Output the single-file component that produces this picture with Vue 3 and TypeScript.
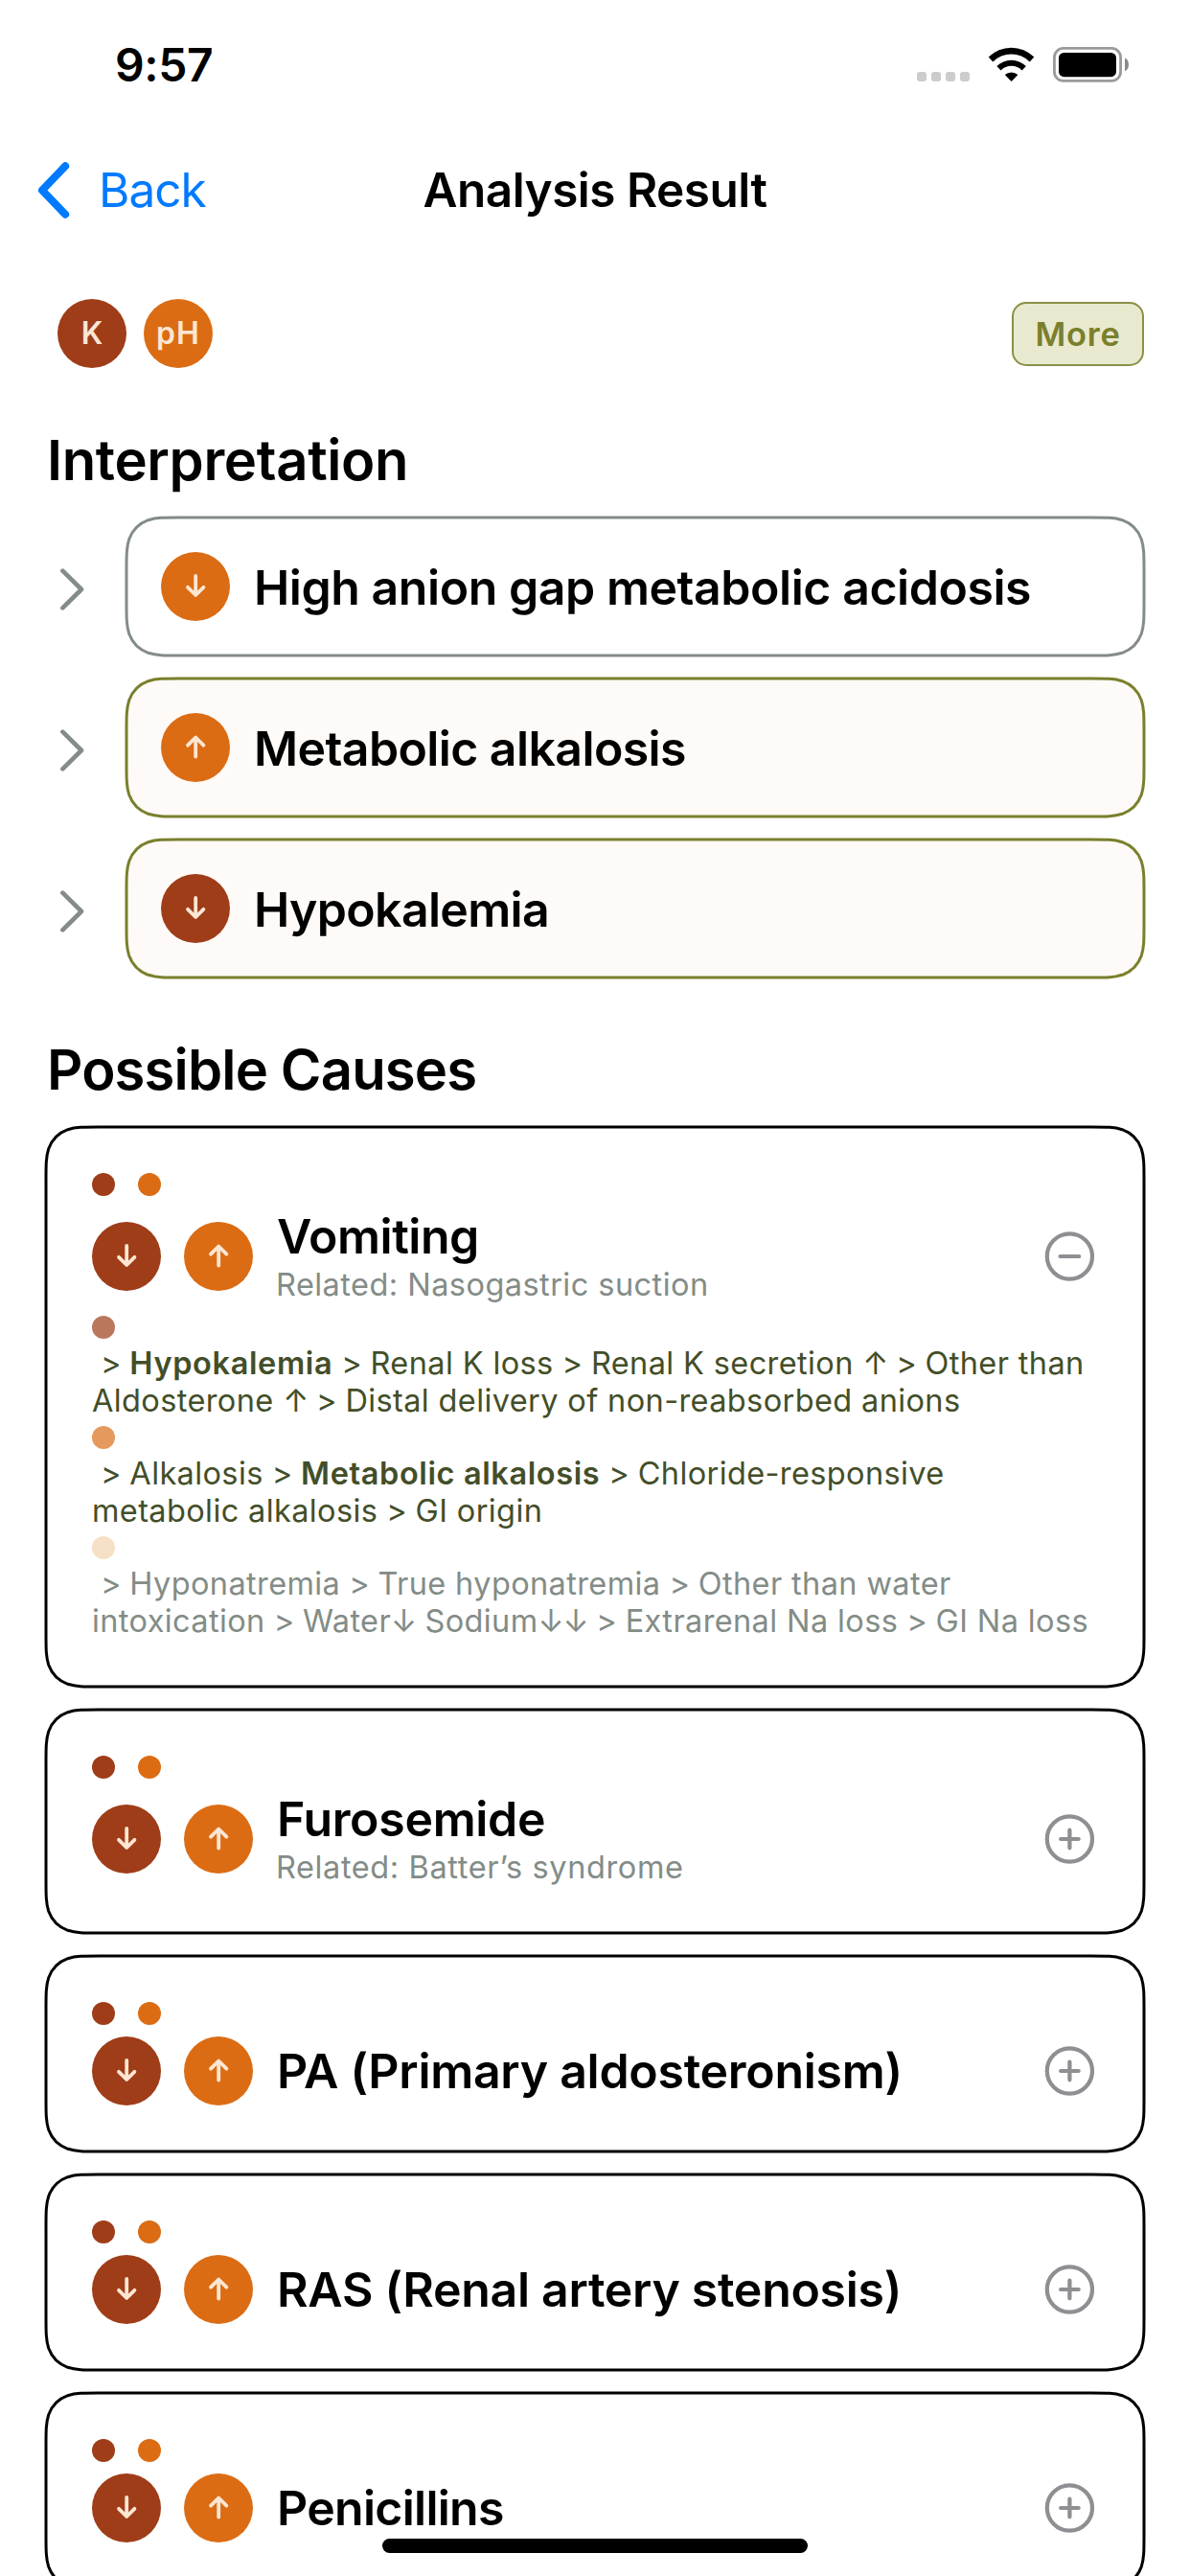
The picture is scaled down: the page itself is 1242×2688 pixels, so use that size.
<script setup lang="ts">
type Tone = 'rust' | 'orange' | 'cream'
type Direction = 'up' | 'down'

interface Badge {
  tone: Tone
  direction: Direction
}

interface Finding {
  name: string
  tracking: number
  badge: Badge
  active: boolean
}

interface Segment {
  text: string
  strong?: boolean
}

interface Pathway {
  tone: Tone
  muted: boolean
  lines: Segment[][]
}

interface Cause {
  name: string
  tracking: number
  related?: string
  relatedTracking?: number
  height: number
  pathways?: Pathway[]
}

const findings: Finding[] = [
  { name: 'High anion gap metabolic acidosis', tracking: -0.45, badge: { tone: 'orange', direction: 'down' }, active: false },
  { name: 'Metabolic alkalosis', tracking: -0.6, badge: { tone: 'orange', direction: 'up' }, active: true },
  { name: 'Hypokalemia', tracking: -0.67, badge: { tone: 'rust', direction: 'down' }, active: true },
]

const badges: Badge[] = [
  { tone: 'rust', direction: 'down' },
  { tone: 'orange', direction: 'up' },
]

const causes: Cause[] = [
  {
    name: 'Vomiting',
    tracking: -0.48,
    related: 'Nasogastric suction',
    relatedTracking: 0.45,
    height: 584,
    pathways: [
      {
        tone: 'rust',
        muted: false,
        lines: [
          [
            { text: ' > ' },
            { text: 'Hypokalemia', strong: true },
            { text: ' > Renal K loss > Renal K secretion ↑ > Other than' },
          ],
          [{ text: 'Aldosterone ↑ > Distal delivery of non-reabsorbed anions' }],
        ],
      },
      {
        tone: 'orange',
        muted: false,
        lines: [
          [
            { text: ' > Alkalosis > ' },
            { text: 'Metabolic alkalosis', strong: true },
            { text: ' > Chloride-responsive' },
          ],
          [{ text: 'metabolic alkalosis > GI origin' }],
        ],
      },
      {
        tone: 'cream',
        muted: true,
        lines: [
          [{ text: ' > Hyponatremia > True hyponatremia > Other than water' }],
          [{ text: 'intoxication > Water↓ Sodium↓↓ > Extrarenal Na loss > GI Na loss' }],
        ],
      },
    ],
  },
  { name: 'Furosemide', tracking: -0.32, related: 'Batter’s syndrome', relatedTracking: 0.6, height: 233 },
  { name: 'PA (Primary aldosteronism)', tracking: -0.28, height: 204 },
  { name: 'RAS (Renal artery stenosis)', tracking: -0.3, height: 204 },
  { name: 'Penicillins', tracking: -0.72, height: 204 },
]

const arrows: Record<Direction, string> = {
  down: 'M36.2 25v19M28 36.8l8.2 8.2 8.2-8.2',
  up: 'M36.2 45.5v-19M28 33.7l8.2-8.2 8.2 8.2',
}

interface Token {
  text: string
  kind: 'strong' | 'separator' | 'arrow' | 'word'
}

/* Splits a line so that separators and arrows can be set tighter than words. */
function tokens(line: Segment[]): Token[] {
  return line.flatMap((seg): Token[] =>
    seg.strong
      ? [{ text: seg.text, kind: 'strong' }]
      : seg.text
          .split(/( > |[↑↓])/)
          .filter((t) => t !== '')
          .map((t) => ({
            text: t,
            kind: t === ' > ' ? 'separator' : /[↑↓]/.test(t) ? 'arrow' : 'word',
          })),
  )
}

/* Rounded rectangle with continuous-curvature corners. */
function squircle(w: number, h: number, r = 36): string {
  const a = 1.52866 * r
  const b = 1.08849 * r
  const c = 0.86841 * r
  const d = 0.63149 * r
  const e = 0.07491 * r
  const f = 0.37282 * r
  const g = 0.16906 * r
  return [
    `M${a} 0H${w - a}`,
    `C${w - b} 0 ${w - c} 0 ${w - d} ${e}`,
    `C${w - f} ${g} ${w - g} ${f} ${w - e} ${d}`,
    `C${w} ${c} ${w} ${b} ${w} ${a}V${h - a}`,
    `C${w} ${h - b} ${w} ${h - c} ${w - e} ${h - d}`,
    `C${w - g} ${h - f} ${w - f} ${h - g} ${w - d} ${h - e}`,
    `C${w - c} ${h} ${w - b} ${h} ${w - a} ${h}H${a}`,
    `C${b} ${h} ${c} ${h} ${d} ${h - e}`,
    `C${f} ${h - g} ${g} ${h - f} ${e} ${h - d}`,
    `C0 ${h - c} 0 ${h - b} 0 ${h - a}V${a}`,
    `C0 ${b} 0 ${c} ${e} ${d}`,
    `C${g} ${f} ${f} ${g} ${d} ${e}`,
    `C${c} 0 ${b} 0 ${a} 0Z`,
  ].join('')
}
</script>

<template>
  <div class="screen">
    <header class="status">
      <span class="time">9:57</span>
      <div class="indicators">
        <span class="cellular"><i v-for="n in 4" :key="n"></i></span>
        <svg class="wifi" width="49" height="37" viewBox="0 0 49 37">
          <path d="M.7 10.6A33.4 33.4 0 0 1 48.3 10.6L43.7 15.4A27 27 0 0 0 5.3 15.4Z" />
          <path d="M9.3 20A22 22 0 0 1 39.9 20L35.6 24.4A15.6 15.6 0 0 0 13.6 24.4Z" />
          <path d="M17.8 29A10.4 10.4 0 0 1 31.4 29L24.6 36Z" />
        </svg>
        <svg class="battery" width="79" height="37" viewBox="0 0 79 37">
          <rect x="1.4" y="1.4" width="69.2" height="34" rx="9.5" fill="none" stroke="#9a9a9a" stroke-width="2.8" />
          <rect x="6" y="6" width="60" height="25.2" rx="5.5" fill="#000" />
          <path d="M75 11.6c2.5 1 4 3.7 4 6.8s-1.5 5.8-4 6.8z" fill="#8a8a8a" />
        </svg>
      </div>
    </header>

    <nav class="nav">
      <a class="back">
        <svg width="36" height="60" viewBox="0 0 36 60">
          <path d="M31.2 5.3 7 30.5l24.2 25.2" fill="none" stroke="#007aff" stroke-width="8" stroke-linecap="round" stroke-linejoin="round" />
        </svg>
        <span>Back</span>
      </a>
      <h1>Analysis Result</h1>
    </nav>

    <div class="summary">
      <span class="badge rust analyte">K</span>
      <span class="badge orange analyte ph">pH</span>
      <button class="more" type="button">More</button>
    </div>

    <h2>Interpretation</h2>
    <section class="stack">
      <div v-for="item in findings" :key="item.name" class="finding-row">
        <svg class="chevron" width="30" height="48" viewBox="0 0 30 48">
          <path d="M2.4 4.7 22 24 2.4 43.3" fill="none" stroke="#838c87" stroke-width="4.6" stroke-linecap="round" stroke-linejoin="round" />
        </svg>
        <div class="finding" :class="{ active: item.active }">
          <svg class="outline" width="1062" height="144">
            <path :d="squircle(1062, 144)" />
          </svg>
          <span class="badge" :class="item.badge.tone">
            <svg width="72" height="72"><path :d="arrows[item.badge.direction]" /></svg>
          </span>
          <span class="finding-name" :style="{ letterSpacing: item.tracking + 'px' }">{{ item.name }}</span>
        </div>
      </div>
    </section>

    <h2 class="causes-title">Possible Causes</h2>
    <section class="stack">
      <article v-for="cause in causes" :key="cause.name" class="cause" :style="{ height: cause.height + 'px' }">
        <svg class="outline" width="1146" :height="cause.height">
          <path :d="squircle(1146, cause.height)" />
        </svg>
        <div class="dots"><i class="dot rust"></i><i class="dot orange"></i></div>
        <div class="cause-head">
          <span v-for="b in badges" :key="b.tone" class="badge" :class="b.tone">
            <svg width="72" height="72"><path :d="arrows[b.direction]" /></svg>
          </span>
          <div class="cause-text">
            <h3 :style="{ letterSpacing: cause.tracking + 'px' }">{{ cause.name }}</h3>
            <p v-if="cause.related" class="related" :style="{ letterSpacing: cause.relatedTracking + 'px' }">Related: {{ cause.related }}</p>
          </div>
          <svg class="toggle" width="52" height="52" viewBox="0 0 52 52">
            <circle cx="26.4" cy="26" r="23.6" />
            <path :d="cause.pathways ? 'M16.6 26h19.6' : 'M17.1 26h18.6M26.4 16.7v18.6'" />
          </svg>
        </div>
        <template v-if="cause.pathways">
          <div v-for="path in cause.pathways" :key="path.tone" class="pathway" :class="{ muted: path.muted }">
            <i class="dot faded" :class="path.tone"></i>
            <p>
              <span v-for="(line, i) in path.lines" :key="i" class="line"><span v-for="(t, j) in tokens(line)" :key="j" :class="t.kind">{{ t.text }}</span></span>
            </p>
          </div>
        </template>
      </article>
    </section>

    <div class="home-indicator"></div>
  </div>
</template>

<style>
body {
  margin: 0;
  background: #fff;
}
</style>

<style scoped>
.screen {
  position: relative;
  width: 1242px;
  height: 2688px;
  overflow: hidden;
  background: #fff;
  color: #000;
  font-family: Inter, 'Liberation Sans', sans-serif;
}

h1,
h2,
h3,
p {
  margin: 0;
  font-weight: 600;
}

svg {
  display: block;
  flex: none;
}

.status {
  display: flex;
  justify-content: space-between;
  box-sizing: border-box;
  height: 132px;
  padding: 44px 64px 0 120px;
}

.time {
  font-size: 48px;
  line-height: 48px;
  font-weight: 600;
  letter-spacing: -0.4px;
}

.indicators {
  display: flex;
  align-items: flex-end;
  height: 37px;
  margin-top: 5px;
}

.cellular {
  display: flex;
  gap: 5px;
  margin: 0 19px 1px 0;
}

.cellular i {
  width: 10px;
  height: 10px;
  border-radius: 3px;
  background: #ccc;
}

.wifi {
  margin-right: 19px;
}

.nav {
  display: grid;
  grid-template-columns: 1fr auto 1fr;
  align-items: center;
  height: 132px;
}

.back {
  display: flex;
  align-items: center;
  gap: 30px;
  padding-left: 37px;
  color: #007aff;
  font-size: 49.5px;
  line-height: 60px;
  letter-spacing: -1px;
}

.nav h1 {
  font-size: 49.5px;
  line-height: 60px;
  letter-spacing: -0.51px;
}

.summary {
  display: flex;
  align-items: center;
  height: 72px;
  margin-top: 48px;
  padding: 0 48px 0 60px;
}

.badge {
  display: flex;
  flex: none;
  align-items: center;
  justify-content: center;
  width: 72px;
  height: 72px;
  border-radius: 50%;
}

.badge path {
  fill: none;
  stroke: #fde6d2;
  stroke-width: 3.8;
  stroke-linecap: round;
  stroke-linejoin: round;
}

.rust {
  background: #9f3d19;
}

.orange {
  background: #db6c14;
}

.analyte {
  color: #fbe6d4;
  font-size: 32px;
  line-height: 40px;
  font-weight: 600;
}

.ph {
  margin-left: 18px;
  letter-spacing: 1.2px;
}

.more {
  box-sizing: border-box;
  width: 138px;
  height: 67px;
  margin: 1px 0 0 auto;
  padding: 0;
  border: 2px solid #8b8f45;
  border-radius: 15px;
  background: #e9e9cf;
  color: #7a7f2c;
  font-family: inherit;
  font-size: 34.5px;
  line-height: 40px;
  font-weight: 600;
  letter-spacing: 0.74px;
}

h2 {
  margin: 60px 0 24px 49px;
  font-size: 58px;
  line-height: 72px;
  letter-spacing: -0.35px;
}

.causes-title {
  letter-spacing: -0.85px;
}

.stack {
  display: flex;
  flex-direction: column;
  gap: 24px;
  padding: 0 48px;
}

.finding-row {
  display: grid;
  grid-template-columns: 84px 1fr;
  align-items: center;
}

.chevron {
  margin: 6px 0 0 15px;
}

.finding {
  position: relative;
  display: flex;
  align-items: center;
  box-sizing: border-box;
  height: 144px;
  padding-left: 36px;
}

.outline {
  position: absolute;
  inset: 0;
  overflow: visible;
}

.outline path {
  fill: #fff;
  stroke: #000;
  stroke-width: 3;
}

.finding .outline path {
  stroke: #838c87;
}

.finding.active .outline path {
  fill: #fefaf7;
  stroke: #7a7f2c;
}

.finding > .badge,
.finding-name {
  position: relative;
}

.finding-name {
  margin-left: 25px;
  padding-top: 2px;
  font-size: 50px;
  line-height: 60px;
  font-weight: 600;
  white-space: nowrap;
}

.cause {
  position: relative;
  box-sizing: border-box;
  padding: 48px;
}

.dots,
.cause-head,
.pathway {
  position: relative;
  display: flex;
}

.dots {
  gap: 24px;
}

.dot {
  flex: none;
  width: 24px;
  height: 24px;
  border-radius: 50%;
}

.cause-head {
  align-items: center;
  min-height: 72px;
  margin: 12px 4px 0 0;
}

.cause-head .badge + .badge {
  margin-left: 24px;
}

.cause-text {
  margin-left: 24px;
  white-space: nowrap;
}

h3 {
  padding-left: 1px;
  font-size: 50px;
  line-height: 61px;
}

.related {
  color: #838c87;
  font-size: 32.5px;
  line-height: 40px;
  font-weight: 400;
}

.toggle {
  margin: 0 -44px 0 auto;
}

.cause-head .toggle {
  margin-right: 0;
}

.cause-head {
  width: 1046px;
}

.toggle circle,
.toggle path {
  fill: none;
  stroke: #8e8e93;
  stroke-width: 4.2;
  stroke-linecap: round;
}

.pathway {
  flex-direction: column;
  gap: 6px;
  margin-top: 7px;
  color: #434e28;
}

.cause-head + .pathway {
  margin-top: 12px;
}

.pathway p {
  font-size: 32.5px;
  line-height: 39px;
  font-weight: 400;
  letter-spacing: 0.38px;
  white-space: pre;
}

.line {
  display: block;
}

.separator {
  letter-spacing: -0.15px;
}

.arrow {
  letter-spacing: -1.2px;
}

.strong {
  font-weight: 600;
  letter-spacing: 0.62px;
}

.pathway.muted {
  color: #838c87;
}

.faded.rust {
  background: #bb775c;
}

.faded.orange {
  background: #e6995c;
}

.faded.cream {
  background: #f6e0c6;
}

.home-indicator {
  position: absolute;
  bottom: 24px;
  left: 399px;
  width: 444px;
  height: 15px;
  border-radius: 8px;
  background: #000;
}
</style>
